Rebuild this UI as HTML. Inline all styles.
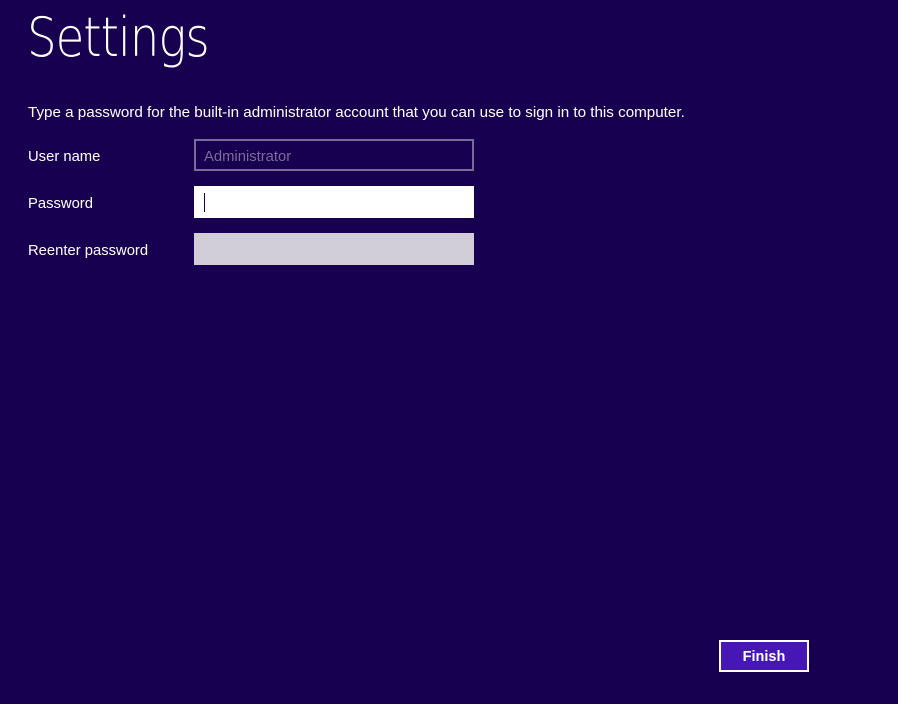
<!DOCTYPE html>
<html><head><style>
html,body{margin:0;padding:0;width:898px;height:704px;background:#180050;overflow:hidden;font-family:"Liberation Sans",sans-serif;color:#fff}
.t{position:absolute;left:27px;top:3px;font-size:54px;letter-spacing:-1.2px;line-height:70px;font-family:"DejaVu Sans ExtraLight","DejaVu Sans Light","Liberation Sans",sans-serif;font-weight:200;transform:scaleX(0.865);transform-origin:left}
.d{position:absolute;left:28px;top:104px;font-size:15.2px;white-space:nowrap}
.l{position:absolute;left:28px;font-size:14.8px}
.b{position:absolute;left:194px;width:280px;height:32px;box-sizing:border-box}
.btn{position:absolute;left:719px;top:640px;width:90px;height:32px;box-sizing:border-box;border:2px solid #fff;background:#4617b4;font-weight:bold;font-size:14.5px;text-align:center;line-height:30px}
</style></head><body>
<div class="t">Settings</div>
<div class="d">Type a password for the built-in administrator account that you can use to sign in to this computer.</div>
<div class="l" style="top:149px">User name</div>
<div class="l" style="top:196px">Password</div>
<div class="l" style="top:243px">Reenter password</div>
<div class="b" style="top:139px;border:2px solid #7a6c99;color:#7a6c99;font-size:14.8px;padding:8px 0 0 8px">Administrator</div>
<div class="b" style="top:186px;background:#fff"><div style="position:absolute;left:10px;top:7px;width:1px;height:19px;background:#180050"></div></div>
<div class="b" style="top:233px;background:#d2ced9"></div>
<div class="btn">Finish</div>
</body></html>
